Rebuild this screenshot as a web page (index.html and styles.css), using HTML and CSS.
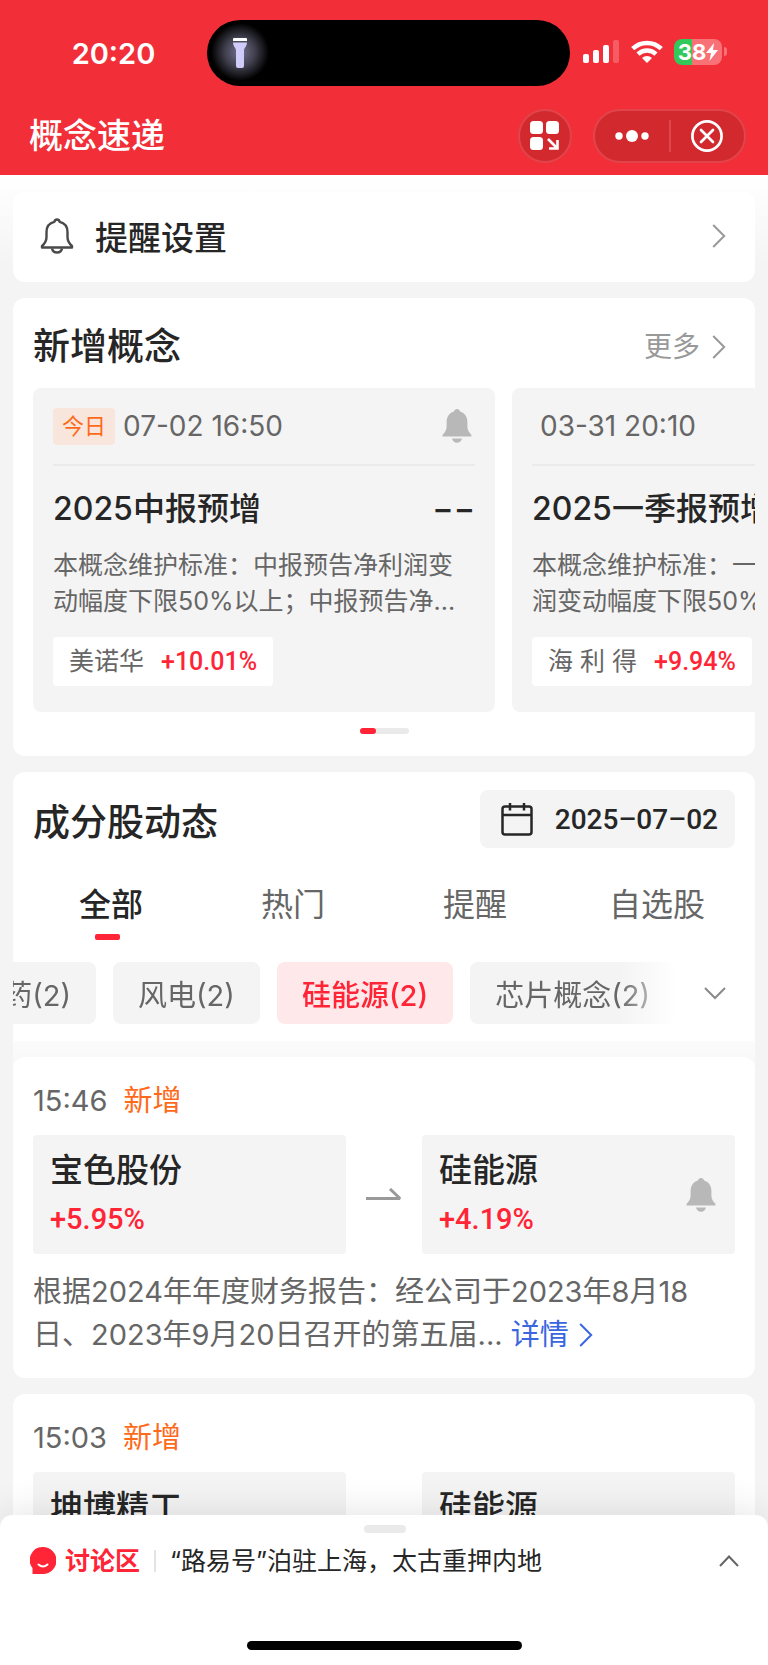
FILE: index.html
```html
<!DOCTYPE html>
<html lang="zh-CN">
<head>
    <meta charset="utf-8">
    <meta name="viewport" content="width=device-width, initial-scale=1">
    <title>概念速递</title>
    <link rel="stylesheet" href="styles.css">
</head>
<body>
<svg class="defs" aria-hidden="true">
    <symbol id="bell" viewBox="0 0 30 34">
        <path d="M15 0c1.600 0 2.600 1 3.200 2.400C23 4 25.400 7.800 25.400 13v4.500c0 3.500 1.600 6 4 8.300v1.700H.6v-1.700c2.400-2.300 4-4.800 4-8.300V13C4.600 7.800 7 4 11.800 2.400 12.400 1 13.400 0 15 0z"/>
        <path d="M10 29.500h10c-.5 2.500-2.500 4.200-5 4.200s-4.500-1.700-5-4.200z"/>
    </symbol>
    <symbol id="right" viewBox="0 0 14 24">
        <path d="M1.200 1l11 11-11 11" fill="none" stroke="currentColor" stroke-width="2"/>
    </symbol>
    <symbol id="arrow" viewBox="0 0 36 14">
        <path d="M0 10.500h34L24 1" fill="none" stroke="currentColor" stroke-width="3" stroke-linejoin="bevel"/>
    </symbol>
</svg>
<div class="app">
    <header class="header">
        <div class="status">
            <span class="clock">20:20</span>
            <div class="island">
                <svg width="64" height="66" viewBox="0 0 64 66">
                    <defs>
                        <radialGradient id="glow">
                            <stop offset="0" stop-color="#747294"/>
                            <stop offset=".5" stop-color="#42414f"/>
                            <stop offset="1" stop-color="#000"/>
                        </radialGradient>
                    </defs>
                    <circle cx="33" cy="32" r="29" fill="url(#glow)"/>
                    <path d="M27 18h12a1 1 0 0 1 1 1v2H26v-2a1 1 0 0 1 1-1z" fill="#fff"/>
                    <path d="M26 22.500h14c0 4-3 5-3 8V46q0 2-2 2h-4q-2 0-2-2V30.500c0-3-3-4-3-8z" fill="#cfccfa"/>
                </svg>
            </div>
            <div class="signals">
                <svg width="37" height="24" viewBox="0 0 37 24" fill="#fff">
                    <rect x="0" y="14" width="6" height="9" rx="2"/>
                    <rect x="10" y="10" width="6" height="13" rx="2"/>
                    <rect x="20" y="5" width="6" height="18" rx="2"/>
                    <rect x="30" y="0" width="6" height="23" rx="2" opacity=".22"/>
                </svg>
                <svg width="32" height="24" viewBox="0 0 32 24" fill="none" stroke="#fff" stroke-width="4.500">
                    <path d="M1.700 8.700a20.500 20.500 0 0 1 28.600 0"/>
                    <path d="M7 14.200a13 13 0 0 1 18 0"/>
                    <path d="M16 23l-5-5a7.300 7.300 0 0 1 10 0z" fill="#fff" stroke="none"/>
                </svg>
                <div class="battery">
                    <span class="battery-body">38<svg width="12" height="18" viewBox="0 0 12 18"><path d="M8 0L0 10h5l-1.500 8L12 7H7z" fill="#fff"/></svg></span>
                    <span class="battery-tip"></span>
                </div>
            </div>
        </div>
        <div class="nav">
            <h1 class="nav-title">概念速递</h1>
            <button class="round-btn" aria-label="添加到桌面">
                <svg width="30" height="30" viewBox="0 0 30 30" fill="#fff">
                    <rect x="0" y="0" width="13" height="13" rx="3.500"/>
                    <rect x="16" y="0" width="13" height="13" rx="3.500"/>
                    <rect x="0" y="16" width="13" height="13" rx="3.500"/>
                    <path d="M18 18l9 9M27.500 19v8.500H19" fill="none" stroke="#fff" stroke-width="2.600"/>
                </svg>
            </button>
            <div class="capsule">
                <button aria-label="更多操作">
                    <svg width="34" height="12" viewBox="0 0 34 12" fill="#fff">
                        <circle cx="4" cy="6" r="3.700"/><circle cx="17" cy="6" r="6"/><circle cx="30" cy="6" r="3.700"/>
                    </svg>
                </button>
                <button aria-label="关闭">
                    <svg width="32" height="32" viewBox="0 0 32 32" fill="none" stroke="#fff" stroke-width="2.700" stroke-linecap="round">
                        <circle cx="16" cy="16" r="14.600"/><path d="M10 10l12 12M22 10L10 22"/>
                    </svg>
                </button>
            </div>
        </div>
    </header>

    <main class="content">
        <a class="card remind" href="#">
            <svg width="34" height="36" viewBox="0 0 34 36" fill="none" stroke="#4a4a4a" stroke-width="2.400" stroke-linejoin="round">
                <path d="M17 1.500c1.500 0 2.300 1 2.700 2.400C25 5.200 27.500 9 27.500 14v5c0 4 1.500 6.500 4.500 9v1.500H2V28c3-2.500 4.500-5 4.500-9v-5c0-5 2.500-8.800 7.800-10.100C14.700 2.500 15.500 1.500 17 1.500z"/>
                <path d="M12 30.500c.5 2.500 2.500 4 5 4s4.500-1.500 5-4"/>
            </svg>
            <span class="remind-text">提醒设置</span>
            <svg class="chevron"><use href="#right"/></svg>
        </a>

        <section class="card concepts">
            <div class="section-head">
                <h2>新增概念</h2>
                <a class="more" href="#">更多<svg class="chevron"><use href="#right"/></svg></a>
            </div>
            <div class="slides">
                <article class="slide">
                    <div class="slide-top">
                        <span class="tag">今日</span>
                        <time>07-02 16:50</time>
                        <button class="bell-btn" aria-label="提醒"><svg class="bell"><use href="#bell"/></svg></button>
                    </div>
                    <div class="slide-title"><h3>2025中报预增</h3><span>−−</span></div>
                    <p>本概念维护标准：中报预告净利润变动幅度下限50%以上；中报预告净...</p>
                    <a class="stock" href="#">美诺华<b>+10.01%</b></a>
                </article>
                <article class="slide">
                    <div class="slide-top">
                        <time>03-31 20:10</time>
                        <button class="bell-btn" aria-label="提醒"><svg class="bell"><use href="#bell"/></svg></button>
                    </div>
                    <div class="slide-title"><h3>2025一季报预增</h3><span>−−</span></div>
                    <p>本概念维护标准：一季度报预告净利润变动幅度下限50%以上；一季...</p>
                    <a class="stock" href="#">海 利 得<b>+9.94%</b></a>
                </article>
            </div>
            <div class="pager"><span></span></div>
        </section>

        <section class="card news">
            <div class="section-head">
                <h2>成分股动态</h2>
                <button class="date">
                    <svg width="32" height="33" viewBox="0 0 32 33" fill="none" stroke="#262626" stroke-width="2.500">
                        <rect x="1.500" y="3.500" width="29" height="28" rx="2.500"/>
                        <path d="M1.500 12h29M9 0v7.500M23 0v7.500"/>
                    </svg>
                    2025–07–02
                </button>
            </div>
            <nav class="tabs">
                <button class="tab active">全部</button>
                <button class="tab">热门</button>
                <button class="tab">提醒</button>
                <button class="tab">自选股</button>
            </nav>
            <div class="filter">
                <div class="chips">
                    <button class="chip">医药(2)</button>
                    <button class="chip">风电(2)</button>
                    <button class="chip active">硅能源(2)</button>
                    <button class="chip">芯片概念(2)</button>
                </div>
                <button class="expand" aria-label="展开">
                    <svg width="22" height="13" viewBox="0 0 22 13" fill="none" stroke="#8a8a8a" stroke-width="2"><path d="M1 1l10 10L21 1"/></svg>
                </button>
            </div>
        </section>

        <div class="feed">
            <article class="card item">
                <div class="item-time"><time>15:46</time><span>新增</span></div>
                <div class="pair">
                    <a class="box" href="#"><div><h3>宝色股份</h3><b>+5.95%</b></div></a>
                    <svg class="arrow"><use href="#arrow"/></svg>
                    <div class="box">
                        <div><h3>硅能源</h3><b>+4.19%</b></div>
                        <button class="bell-btn" aria-label="提醒"><svg class="bell"><use href="#bell"/></svg></button>
                    </div>
                </div>
                <p class="detail">根据2024年年度财务报告：经公司于2023年8月18日、2023年9月20日召开的第五届... <a href="#">详情<svg class="chevron"><use href="#right"/></svg></a></p>
            </article>
            <article class="card item">
                <div class="item-time"><time>15:03</time><span>新增</span></div>
                <div class="pair">
                    <a class="box" href="#"><div><h3>坤博精工</h3></div></a>
                    <svg class="arrow"><use href="#arrow"/></svg>
                    <div class="box"><div><h3>硅能源</h3></div></div>
                </div>
            </article>
        </div>
    </main>

    <footer class="sheet">
        <div class="handle"></div>
        <div class="talk">
            <svg width="26" height="28" viewBox="0 0 26 28">
                <path d="M13 0a13 13 0 0 1 0 27H2.500V21A13 13 0 0 1 13 0z" fill="#ff2436"/>
                <path d="M8.500 17.500q4.500 4 9 0" fill="none" stroke="#fff" stroke-width="2" stroke-linecap="round"/>
            </svg>
            <strong>讨论区</strong>
            <a href="#">“路易号”泊驻上海，太古重押内地</a>
            <button aria-label="展开讨论区">
                <svg width="20" height="12" viewBox="0 0 20 12" fill="none" stroke="#666" stroke-width="2"><path d="M1 11l9-9.500 9 9.500"/></svg>
            </button>
        </div>
        <div class="home-bar"></div>
    </footer>
</div>
</body>
</html>
```
FILE: styles.css
```css
*{box-sizing:border-box;}
body,h1,h2,h3,p{margin:0;}
body{
    font-family: Inter, "Noto Sans CJK SC", sans-serif;
    color: #262626;
    background: #f4f4f4;
}
button{
    border: 0;
    padding: 0;
    background: none;
    font: inherit;
    color: inherit;
}
a{color:inherit; text-decoration:none;}
svg{display:block; flex:none;}
h2,h3,b,strong{font-weight:500;}
.defs{position:absolute; width:0; height:0;}
.app{
    display: flex;
    flex-direction: column;
    height: 100vh;
    overflow: hidden;
}

/* header */
.header{
    flex: none;
    padding: 20px 0 12px;
    background: #f22f38;
    color: white;
}
.status{
    display: grid;
    grid-template-columns: 207fr 363px 198fr;
    height: 66px;
    align-items: center;
}
.clock{padding-left:20px; text-align:center; font-size:29px; font-weight:600;}
.island{height:66px; border-radius:33px; background:black;}
.signals{
    display: flex;
    align-items: center;
    justify-content: flex-end;
    gap: 11px;
    padding-right: 41px;
    margin-top: -3px;
}
.battery{display:flex; align-items:center; gap:2px;}
.battery-body{
    display: flex;
    align-items: center;
    justify-content: center;
    width: 48px;
    height: 26px;
    border-radius: 8px;
    background: linear-gradient(90deg, #34c759 38%, #f87177 38%);
    font-size: 22px;
    font-weight: 700;
}
.battery-tip{width:3px; height:9px; border-radius:0 4px 4px 0; background:#f87177;}
.nav{
    display: flex;
    align-items: center;
    padding: 0 22px 0 29px;
    margin-top: 23px;
    height: 54px;
}
.nav-title{flex:1; font-size:34px; line-height:54px; font-weight:500;}
.round-btn,.capsule{
    height: 54px;
    border: 2px solid #e2444b;
    border-radius: 27px;
    background: #d2292f;
}
.round-btn{
    display: flex;
    align-items: center;
    justify-content: center;
    width: 54px;
    margin-right: 21px;
}
.capsule{display:flex; align-items:center; width:153px;}
.capsule button{flex:1; display:flex; justify-content:center; align-items:center; height:32px;}
.capsule button + button{border-left:2px solid #dc464c;}

/* cards */
.content{
    flex: 1;
    min-height: 0;
    overflow: hidden;
    padding: 17px 13px 0;
    background: linear-gradient(#fff, #f4f4f4 90px);
}
.card{border-radius:12px; background:white;}
.chevron{width:14px; height:24px; color:#999;}
.bell{width:30px; height:34px; fill:#b8b8b8;}
.remind{
    display: flex;
    align-items: center;
    gap: 21px;
    height: 90px;
    padding: 0 29px 2px 27px;
}
.remind-text{flex:1; font-size:33px; font-weight:500;}
.section-head{
    display: flex;
    justify-content: space-between;
    align-items: center;
}
.section-head h2{font-size:37px; line-height:54px;}
.concepts{margin-top:16px; padding:22px 0 22px 20px; overflow:hidden;}
.concepts .section-head{padding-right:29px;}
.more{display:flex; align-items:center; gap:12px; font-size:28px; line-height:50px; color:#999;}
.slides{display:flex; gap:17px; margin-top:14px;}
.slide{
    flex: none;
    width: 462px;
    height: 324px;
    padding: 0 20px;
    border-radius: 8px;
    background: #f4f4f4;
}
.slide-top{
    display: flex;
    align-items: center;
    height: 78px;
    border-bottom: 2px solid #eaeaea;
}
.slide-top time{padding-left:8px; font-size:28px; color:#666;}
.tag{
    padding: 0 9px;
    border-radius: 4px;
    font-size: 22px;
    line-height: 37px;
    color: #ff6a1a;
    background: #f8e6dd;
}
.bell-btn{margin-left:auto;}
.slide-top .bell-btn{margin-right:3px;}
.slide-title{
    display: flex;
    justify-content: space-between;
    margin-top: 20px;
    font-size: 32px;
    line-height: 46px;
    font-weight: 500;
}
.slide-title h3{font-size:inherit; white-space:nowrap;}
.slide p{margin-top:15px; font-size:25px; line-height:36px; color:#666;}
.stock{
    display: inline-block;
    margin-top: 18px;
    padding: 0 16px;
    border-radius: 4px;
    background: white;
    font-size: 25px;
    line-height: 48px;
    color: #666;
}
b{font-family:Roboto, sans-serif; color:#ff2436;}
.stock b{margin-left:17px; font-size:25px;}
.pager{
    width: 49px;
    height: 6px;
    margin: 16px auto 0;
    border-radius: 3px;
    background: #eaeaea;
}
/* centre on the card, not on its inset content */
.concepts .pager{position:relative; right:10px;}
.pager span{display:block; width:16px; height:6px; border-radius:3px; background:#ff2436;}

/* stock news */
.news{margin-top:16px; padding-top:18px; border-radius:12px 12px 0 0;}
.news .section-head{align-items:flex-start; padding:0 20px;}
.news h2{margin-top:6px;}
.date{
    display: flex;
    align-items: center;
    gap: 22px;
    height: 58px;
    padding: 0 17px 0 21px;
    border-radius: 8px;
    background: #f4f4f4;
    font-family: Roboto, sans-serif;
    font-size: 28px;
    font-weight: 500;
}
.tabs{display:flex; padding:0 7px; margin-top:26px;}
.tab{flex:1; height:64px; padding-bottom:6px; font-size:32px; line-height:58px; color:#666;}
.tab.active{color:#262626; font-weight:500; position:relative;}
.tab.active::after{
    content: "";
    position: absolute;
    left: 50%;
    bottom: 0;
    width: 25px;
    height: 6px;
    margin-left: -16px;
    border-radius: 2px;
    background: #ff2436;
}
.filter{display:flex; align-items:center; padding:22px 29px 17px 0;}
.chips{
    flex: 1;
    display: flex;
    gap: 17px;
    justify-content: flex-end;
    overflow: hidden;
    padding-right: 14px;
    -webkit-mask-image: linear-gradient(270deg, transparent 10px, #000 70px);
    mask-image: linear-gradient(270deg, transparent 10px, #000 70px);
}
.chip{
    flex: none;
    height: 62px;
    padding: 0 25px;
    border-radius: 8px;
    background: #f4f4f4;
    font-size: 29px;
    color: #666;
}
.chip.active{background:#ffe8ea; color:#ff2436; font-weight:500;}
.expand{padding-left:15px;}
.feed{
    padding-top: 16px;
    background: linear-gradient(#fbfbfb, #f4f4f4 60px);
}
.item{padding:23px 20px 22px;}
.item + .item{margin-top:16px;}
.item-time{display:flex; gap:16px; font-size:29px; line-height:42px;}
.item-time time{color:#666;}
.item-time span{color:#ff6a1a;}
.pair{display:flex; align-items:center; margin-top:13px;}
.box{
    flex: 1;
    display: flex;
    align-items: center;
    height: 119px;
    padding: 0 19px 0 17px;
    border-radius: 4px;
    background: #f4f4f4;
}
.box div{height:100%; padding-top:12px;}
.box h3{font-size:33px; line-height:46px;}
.box b{font-size:29px; line-height:52px;}
.arrow{width:36px; height:14px; margin:0 20px; color:#999;}
.detail{margin-top:16px; font-size:29px; line-height:43px; color:#666;}
.detail a{color:#3a66e0;}
.detail .chevron{display:inline-block; margin-left:10px; color:inherit; vertical-align:-2px;}

/* discussion sheet */
.sheet{
    flex: none;
    position: relative;
    height: 150px;
    padding: 10px 29px 15px 30px;
    border-radius: 12px 12px 0 0;
    background: white;
    box-shadow: 0 0 40px rgba(0,0,0,.12);
    display: flex;
    flex-direction: column;
}
.handle{width:42px; height:8px; margin:0 auto; border-radius:4px; background:#eaeaea;}
.talk{display:flex; align-items:center; margin-top:9px; line-height:38px; font-size:25px;}
.talk strong{
    margin-left: 9px;
    padding-right: 14px;
    color: #ff2436;
    font-weight: 700;
}
.talk a{flex:1; padding-left:16px; background:linear-gradient(#e4e4e4,#e4e4e4) 0 50%/2px 22px no-repeat;}
.home-bar{width:275px; height:9px; margin:auto auto 0; border-radius:5px; background:black;}
```
